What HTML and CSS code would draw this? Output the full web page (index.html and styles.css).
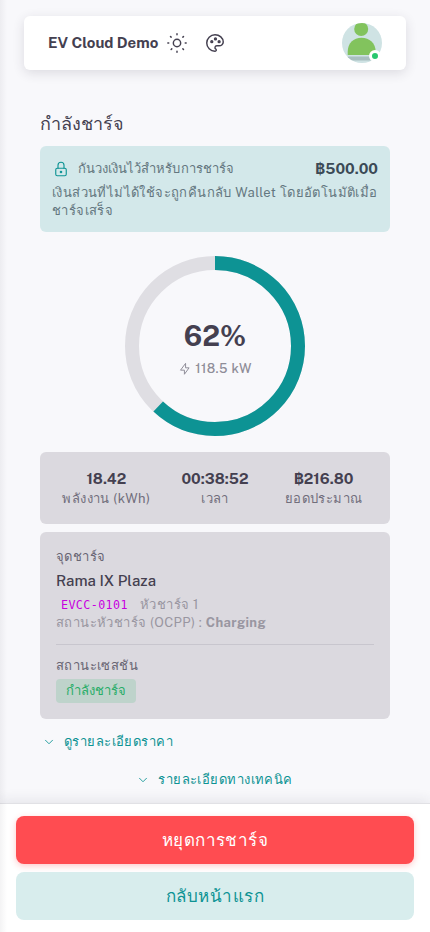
FILE: index.html
```html
<!DOCTYPE html>
<html lang="th">
<head>
<meta charset="utf-8">
<meta name="viewport" content="width=device-width, initial-scale=1">
<title>EV Cloud Demo</title>
<link rel="stylesheet" href="styles.css">
</head>
<body>
<div class="app">
  <header class="navbar">
    <span class="brand">EV Cloud Demo</span>
    <svg class="icon sun" viewBox="0 0 24 24"><path d="M8 12a4 4 0 1 0 8 0a4 4 0 1 0-8 0M3 12H2m10-9V2m9 10h1m-10 9v1M5.6 5.6l-.7-.7m13.5.7l.7-.7m-.7 13.5l.7.7m-12.8-.7l-.7.7"/></svg>
    <svg class="icon palette" viewBox="0 0 24 24"><path d="M12 21a9 9 0 0 1 0-18c4.97 0 9 3.582 9 8c0 1.06-.474 2.078-1.318 2.828S17.693 15 16.5 15H14a2 2 0 0 0-1 3.75A1.3 1.3 0 0 1 12 21"/><path d="M7.5 10.5a1 1 0 1 0 2 0a1 1 0 1 0-2 0m4-3a1 1 0 1 0 2 0a1 1 0 1 0-2 0m4 3a1 1 0 1 0 2 0a1 1 0 1 0-2 0"/></svg>
    <div class="avatar">
      <svg viewBox="0 0 40 40"><defs><clipPath id="round"><circle cx="20" cy="20" r="20"/></clipPath></defs><g clip-path="url(#round)"><rect width="40" height="40" fill="#cfe3e4"/><rect x="5" y="33.500" width="29" height="4" rx="2" fill="#a9bfc0"/><path d="M5.7 32V29C5.7 20 11.500 14.700 19.500 14.700S33.700 20 33.700 29v3z" fill="#82c35d"/><circle cx="19.200" cy="6" r="7" fill="#82c35d"/></g></svg>
      <span class="online"></span>
    </div>
  </header>

  <main class="content">
    <h1 class="title">กำลังชาร์จ</h1>
    <section class="hold">
      <div class="hold-row">
        <svg class="icon lock" viewBox="0 0 24 24"><path d="M5 13a2 2 0 0 1 2-2h10a2 2 0 0 1 2 2v6a2 2 0 0 1-2 2H7a2 2 0 0 1-2-2z"/><path d="M11 16a1 1 0 1 0 2 0a1 1 0 0 0-2 0m-3-5V7a4 4 0 1 1 8 0v4"/></svg>
        <span class="hold-label">กันวงเงินไว้สำหรับการชาร์จ</span>
        <strong class="hold-amount">฿500.00</strong>
      </div>
      <p class="hold-note">เงินส่วนที่ไม่ได้ใช้จะถูกคืนกลับ Wallet โดยอัตโนมัติเมื่อ<br>ชาร์จเสร็จ</p>
    </section>

    <section class="gauge">
      <svg class="ring" viewBox="0 0 180 180"><circle class="track" cx="90" cy="90" r="83"/><circle class="progress" cx="90" cy="90" r="83" pathLength="100"/></svg>
      <div class="gauge-text">
        <strong class="percent">62%</strong>
        <span class="power"><svg class="icon bolt" viewBox="0 0 24 24"><path d="M13 3v7h6l-8 11v-7H5z"/></svg>118.5 kW</span>
      </div>
    </section>

    <section class="stats">
      <div class="stat"><strong>18.42</strong><span>พลังงาน (kWh)</span></div>
      <div class="stat"><strong>00:38:52</strong><span>เวลา</span></div>
      <div class="stat"><strong>฿216.80</strong><span>ยอดประมาณ</span></div>
    </section>

    <section class="details">
      <div class="caption">จุดชาร์จ</div>
      <div class="station">Rama IX Plaza</div>
      <div class="connector"><code>EVCC-0101</code><span>หัวชาร์จ 1</span></div>
      <div class="ocpp">สถานะหัวชาร์จ (OCPP) : <b>Charging</b></div>
      <hr class="divider">
      <div class="caption session">สถานะเซสชัน</div>
      <span class="chip">กำลังชาร์จ</span>
    </section>

    <div class="link price"><svg class="icon chevron" viewBox="0 0 24 24"><path d="m6 9l6 6l6-6"/></svg><span>ดูรายละเอียดราคา</span></div>
    <div class="link technical"><svg class="icon chevron" viewBox="0 0 24 24"><path d="m6 9l6 6l6-6"/></svg><span>รายละเอียดทางเทคนิค</span></div>
  </main>

  <footer class="actions">
    <button class="btn stop">หยุดการชาร์จ</button>
    <button class="btn home">กลับหน้าแรก</button>
  </footer>
  <div class="edge"></div>
</div>
</body>
</html>
```
FILE: styles.css
```css
* { box-sizing: border-box; }
body {
  margin: 0;
  background: #f8f8fb;
  color: #444050;
  font-family: "Public Sans", Inter, "Noto Sans", sans-serif;
  font-size: 13px;
  line-height: 18px;
}
.app {
  position: relative;
  height: 932px;
  overflow: hidden;
  display: flex;
  flex-direction: column;
}
.icon {
  flex: none;
  fill: none;
  stroke: currentColor;
  stroke-width: 1.5;
  stroke-linecap: round;
  stroke-linejoin: round;
}
.navbar {
  flex: none;
  display: flex;
  align-items: center;
  height: 54px;
  margin: 16px 24px 0;
  padding: 0 24px;
  border-radius: 6px;
  background: #fff;
  box-shadow: 0 3px 12px rgba(47, 43, 61, .14);
}
.brand { width: 110px; font-size: 15px; font-weight: 700; white-space: nowrap; }
.sun, .palette { width: 22px; height: 22px; stroke-width: 1.6; }
.sun { margin-left: 8px; }
.palette { margin-left: 16px; }
.avatar { position: relative; width: 40px; height: 40px; margin-left: auto; }
.avatar svg { display: block; width: 40px; height: 40px; }
.online {
  position: absolute;
  right: 1px;
  bottom: 1px;
  width: 12px;
  height: 12px;
  border: 3px solid #fff;
  border-radius: 50%;
  background: #28c76f;
}
.content { flex: 1; min-height: 0; padding: 40px 40px 0; }
.title { margin: 0; height: 36px; font-size: 18px; font-weight: 400; line-height: 28px; }
.hold {
  height: 86px;
  padding: 12px;
  border-radius: 6px;
  background: #d3e8ea;
  color: #647780;
}
.hold-row { display: flex; align-items: center; height: 22px; }
.lock { width: 18px; height: 18px; color: #0d9394; }
.hold-label { margin-left: 8px; letter-spacing: .04px; }
.hold-amount { margin-left: auto; font-size: 15px; color: #3b4a56; }
.hold-note { margin: 4px 0 0; white-space: nowrap; letter-spacing: .4px; }
.gauge { display: grid; place-items: center; height: 220px; padding: 8px 0 0; }
.ring { grid-area: 1 / 1; width: 180px; height: 180px; transform: rotate(-90deg); }
.ring circle { fill: none; stroke-width: 14; }
.track { stroke: #dfdee3; }
.progress { stroke: #0d9394; stroke-dasharray: 62 100; }
.gauge-text { grid-area: 1 / 1; display: flex; flex-direction: column; align-items: center; padding-top: 3px; }
.percent { font-size: 28px; line-height: 42px; }
.power { display: flex; align-items: center; gap: 3px; height: 24px; padding-top: 1px; color: #8f8d98; font-weight: 500; letter-spacing: .4px; }
.bolt { width: 14px; height: 14px; stroke-width: 1.7; }
.stats {
  display: grid;
  grid-template-columns: repeat(3, 1fr);
  height: 72px;
  margin-bottom: 8px;
  padding: 16px 12px;
  border-radius: 6px;
  background: #dbd9df;
}
.stat { display: flex; flex-direction: column; align-items: center; color: #716e7c; }
.stat strong { font-size: 15px; line-height: 22px; color: #444050; }
.stat span { letter-spacing: .4px; }
.details { height: 187px; padding: 16px; border-radius: 6px; background: #dbd9df; }
.caption { color: #686573; letter-spacing: .4px; }
.station { font-size: 15px; font-weight: 500; line-height: 22px; margin-top: 4px; }
.connector, .ocpp { color: #9996a1; letter-spacing: .4px; }
.connector { display: flex; margin-top: 4px; }
.connector code { width: 84px; padding-left: 5px; font-family: "DejaVu Sans Mono", monospace; font-size: 11.7px; letter-spacing: .4px; color: #c800e0; }
.divider { height: 1px; margin: 12px 0; border: 0; background: #c8c6ce; }
.session { margin-bottom: 4px; }
.chip {
  display: inline-flex;
  align-items: center;
  height: 24px;
  padding: 0 10px;
  border-radius: 4px;
  background: #bed3cb;
  color: #28ad68;
}
.link { display: flex; align-items: center; height: 38px; color: #0d9394; letter-spacing: .43px; }
.price { margin-top: 4px; padding-left: 2px; }
.technical { justify-content: center; padding-right: 1px; }
.chevron { width: 14px; height: 14px; margin-right: 8px; }
.actions {
  flex: none;
  display: flex;
  flex-direction: column;
  gap: 8px;
  height: 129px;
  padding: 12px 16px;
  border-top: 1px solid #e1e1e5;
  background: #fff;
  box-shadow: 0 -3px 12px rgba(47, 43, 61, .09);
}
.btn {
  height: 48px;
  border: 0;
  border-radius: 8px;
  font: 400 17px/24px "Public Sans", Inter, "Noto Sans", sans-serif;
  letter-spacing: .43px;
}
.stop { background: #ff4c51; color: #fff; box-shadow: 0 2px 6px rgba(255, 76, 81, .3); }
.home { background: #d8eded; color: #0d9394; }
.edge {
  position: absolute;
  inset: 0 auto 0 0;
  width: 7px;
  background: linear-gradient(90deg, rgba(47, 43, 61, .055), transparent);
}
```
